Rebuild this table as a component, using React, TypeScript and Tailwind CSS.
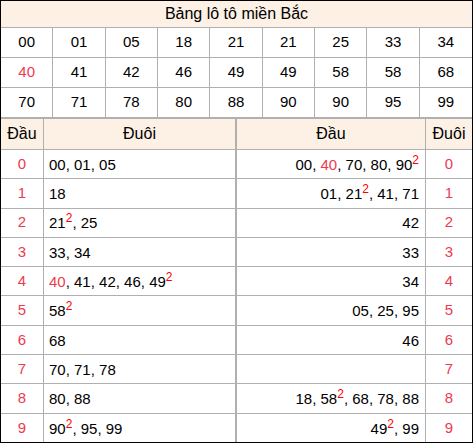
import React from "react";

type Item = { v: string; red?: boolean; sup?: boolean };

const topRows: Item[][] = [
  ["00", "01", "05", "18", "21", "21", "25", "33", "34"].map((v) => ({ v })),
  ["40", "41", "42", "46", "49", "49", "58", "58", "68"].map((v, i) => ({ v, red: i === 0 })),
  ["70", "71", "78", "80", "88", "90", "90", "95", "99"].map((v) => ({ v })),
];

const p = (s: string): Item[] =>
  s === ""
    ? []
    : s.split(",").map((t) => {
        const x = t.trim();
        return {
          v: x.replace(/[*^]/g, ""),
          red: x.includes("*"),
          sup: x.includes("^"),
        };
      });

const leftRows = [
  "00, 01, 05",
  "18",
  "21^, 25",
  "33, 34",
  "40*, 41, 42, 46, 49^",
  "58^",
  "68",
  "70, 71, 78",
  "80, 88",
  "90^, 95, 99",
].map(p);

const rightRows = [
  "00, 40*, 70, 80, 90^",
  "01, 21^, 41, 71",
  "42",
  "33",
  "34",
  "05, 25, 95",
  "46",
  "",
  "18, 58^, 68, 78, 88",
  "49^, 99",
].map(p);

function Items({ items }: { items: Item[] }) {
  return (
    <>
      {items.map((it, i) => (
        <React.Fragment key={i}>
          {i > 0 && ", "}
          <span className={it.red ? "text-[#ee3a50]" : ""}>{it.v}</span>
          {it.sup && (
            <sup className="text-[#ff0000] text-[12px] relative top-[-6px] align-baseline leading-none">2</sup>
          )}
        </React.Fragment>
      ))}
    </>
  );
}

export default function App() {
  return (
    <div
      className="w-[473px] h-[443px] border border-black bg-white flex flex-col text-black"
      style={{ fontFamily: '"Liberation Sans", Arial, sans-serif' }}
    >
      <div className="h-[27px] shrink-0 bg-[#fdf1e6] border-b border-[#b0b0b0] flex items-center justify-center text-[16px]">
        Bảng lô tô miền Bắc
      </div>
      {topRows.map((row, r) => (
        <div key={r} className="h-[30px] shrink-0 grid grid-cols-9 border-b border-[#b0b0b0]">
          {row.map((it, c) => (
            <div
              key={c}
              className={`flex items-center justify-center text-[15px] ${c < 8 ? "border-r border-[#b0b0b0]" : ""} ${
                it.red ? "text-[#ee3a50]" : ""
              }`}
            >
              {it.v}
            </div>
          ))}
        </div>
      ))}
      <div className="flex-1 flex border-t border-[#b0b0b0] min-h-0">
        <div className="w-[235px] flex flex-col border-r border-[#b0b0b0]">
          <div className="h-[31px] shrink-0 flex bg-[#fdf1e6] border-b border-[#b0b0b0] text-[16px]">
            <div className="w-[43px] border-r border-[#b0b0b0] flex items-center justify-center">Đầu</div>
            <div className="flex-1 flex items-center justify-center">Đuôi</div>
          </div>
          {leftRows.map((items, i) => (
            <div key={i} className={`flex-1 flex text-[15px] ${i < 9 ? "border-b border-[#b0b0b0]" : ""}`}>
              <div className="w-[43px] border-r border-[#b0b0b0] flex items-center justify-center text-[#ee3a50]">
                {i}
              </div>
              <div className="flex-1 flex items-center pl-[5px] pt-[2px]">
                <span>
                  <Items items={items} />
                </span>
              </div>
            </div>
          ))}
        </div>
        <div className="flex-1 flex flex-col border-l border-[#b0b0b0]">
          <div className="h-[31px] shrink-0 flex bg-[#fdf1e6] border-b border-[#b0b0b0] text-[16px]">
            <div className="flex-1 border-r border-[#b0b0b0] flex items-center justify-center">Đầu</div>
            <div className="w-[46px] flex items-center justify-center">Đuôi</div>
          </div>
          {rightRows.map((items, i) => (
            <div key={i} className={`flex-1 flex text-[15px] ${i < 9 ? "border-b border-[#b0b0b0]" : ""}`}>
              <div className="flex-1 border-r border-[#b0b0b0] flex items-center justify-end pr-[6px] pt-[2px]">
                <span>
                  <Items items={items} />
                </span>
              </div>
              <div className="w-[46px] flex items-center justify-center text-[#ee3a50]">{i}</div>
            </div>
          ))}
        </div>
      </div>
    </div>
  );
}
